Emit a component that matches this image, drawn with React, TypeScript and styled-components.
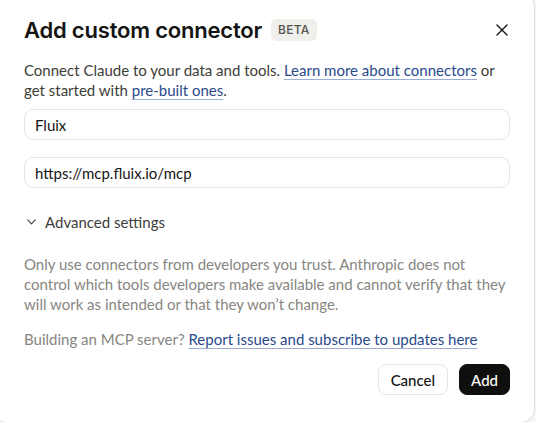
import React from 'react';
import styled, { createGlobalStyle } from 'styled-components';

const GlobalStyle = createGlobalStyle`
  html, body {
    margin: 0;
    padding: 0;
    background: #fafaf9;
    overflow: hidden;
  }
  body {
    font-family: Lato, "Noto Sans", sans-serif;
    -webkit-font-smoothing: antialiased;
  }
`;

const Dialog = styled.div`
  box-sizing: border-box;
  width: 543px;
  margin: -8px 0 0 -8px;
  padding: 22px 24px 27px 31px;
  background: #ffffff;
  border: 1px solid #dcdcd8;
  border-radius: 14px;
  box-shadow: 0 2px 6px rgba(0, 0, 0, 0.04);
  display: flex;
  flex-direction: column;
`;

const Header = styled.div`
  display: flex;
  align-items: center;
  gap: 9px;
`;

const Title = styled.h2`
  margin: 0;
  font-family: Inter, "Noto Sans", sans-serif;
  font-size: 22px;
  font-weight: 600;
  letter-spacing: -0.2px;
  color: #141413;
  line-height: 30px;
`;

const Badge = styled.span`
  font-family: Inter, "Noto Sans", sans-serif;
  font-size: 12px;
  font-weight: 500;
  color: #55544f;
  background: #f0efeb;
  border-radius: 5px;
  padding: 4px 7px;
  line-height: 14px;
  letter-spacing: 0.3px;
`;

const CloseButton = styled.button`
  margin-left: auto;
  margin-right: 1px;
  border: 0;
  background: none;
  padding: 0;
  width: 14px;
  height: 14px;
  display: flex;
  align-items: center;
  justify-content: center;
  color: #141413;
`;

const Text = styled.p<{ muted?: boolean }>`
  margin: 0;
  font-size: 15px;
  line-height: 20px;
  color: ${(p) => (p.muted ? '#87867f' : '#3d3d3a')};
`;

const Link = styled.a`
  color: #2a4a8c;
  text-decoration: underline;
  text-decoration-color: #9aaed3;
  text-underline-offset: 3px;
  text-decoration-thickness: 1px;
`;

const Intro = styled(Text)`
  margin-top: 15px;
`;

const Fields = styled.div`
  display: flex;
  flex-direction: column;
  gap: 17px;
  margin-top: 9px;
`;

const Input = styled.input`
  box-sizing: border-box;
  width: 100%;
  height: 31px;
  border: 1px solid #e6e5e0;
  border-radius: 9px;
  padding: 0 10px;
  font-family: Lato, "Noto Sans", sans-serif;
  font-size: 15px;
  color: #141413;
  background: #ffffff;
  outline: none;
`;

const Toggle = styled.button`
  display: flex;
  align-items: center;
  gap: 9px;
  margin-top: 24px;
  padding: 0 0 0 3px;
  border: 0;
  background: none;
  font-family: inherit;
  font-size: 15px;
  color: #3d3d3a;
  line-height: 20px;
`;

const Notes = styled.div`
  display: flex;
  flex-direction: column;
  gap: 15px;
  margin-top: 22px;
`;

const Actions = styled.div`
  display: flex;
  justify-content: flex-end;
  gap: 11px;
  margin-top: 15px;
`;

const Button = styled.button<{ primary?: boolean }>`
  height: 31px;
  padding: 0 ${(p) => (p.primary ? '11px' : '12px')};
  border-radius: 8px;
  font-family: inherit;
  font-size: 15px;
  font-weight: 500;
  border: 1px solid ${(p) => (p.primary ? '#0f0f0e' : '#e6e5e0')};
  background: ${(p) => (p.primary ? '#0f0f0e' : '#ffffff')};
  color: ${(p) => (p.primary ? '#ffffff' : '#141413')};
`;

export default function App() {
  return (
    <>
      <GlobalStyle />
      <Dialog>
        <Header>
          <Title>Add custom connector</Title>
          <Badge>BETA</Badge>
          <CloseButton aria-label="Close">
            <svg width="12" height="12" viewBox="0 0 12 12" fill="none" stroke="currentColor" strokeWidth="1.4" strokeLinecap="round">
              <path d="M1 1l10 10M11 1L1 11" />
            </svg>
          </CloseButton>
        </Header>
        <Intro>
          Connect Claude to your data and tools. <Link href="#">Learn more about connectors</Link> or
          get started with <Link href="#">pre-built ones</Link>.
        </Intro>
        <Fields>
          <Input defaultValue="Fluix" />
          <Input defaultValue="https://mcp.fluix.io/mcp" />
        </Fields>
        <Toggle>
          <svg width="9" height="6" viewBox="0 0 9 6" fill="none" stroke="#3d3d3a" strokeWidth="1.1" strokeLinecap="round" strokeLinejoin="round">
            <path d="M0.7 0.9L4.5 4.9L8.3 0.9" />
          </svg>
          Advanced settings
        </Toggle>
        <Notes>
          <Text muted>
            Only use connectors from developers you trust. Anthropic does not control which tools
            developers make available and cannot verify that they will work as intended or that
            they won’t change.
          </Text>
          <Text muted>
            Building an MCP server? <Link href="#">Report issues and subscribe to updates here</Link>
          </Text>
        </Notes>
        <Actions>
          <Button>Cancel</Button>
          <Button primary>Add</Button>
        </Actions>
      </Dialog>
    </>
  );
}
